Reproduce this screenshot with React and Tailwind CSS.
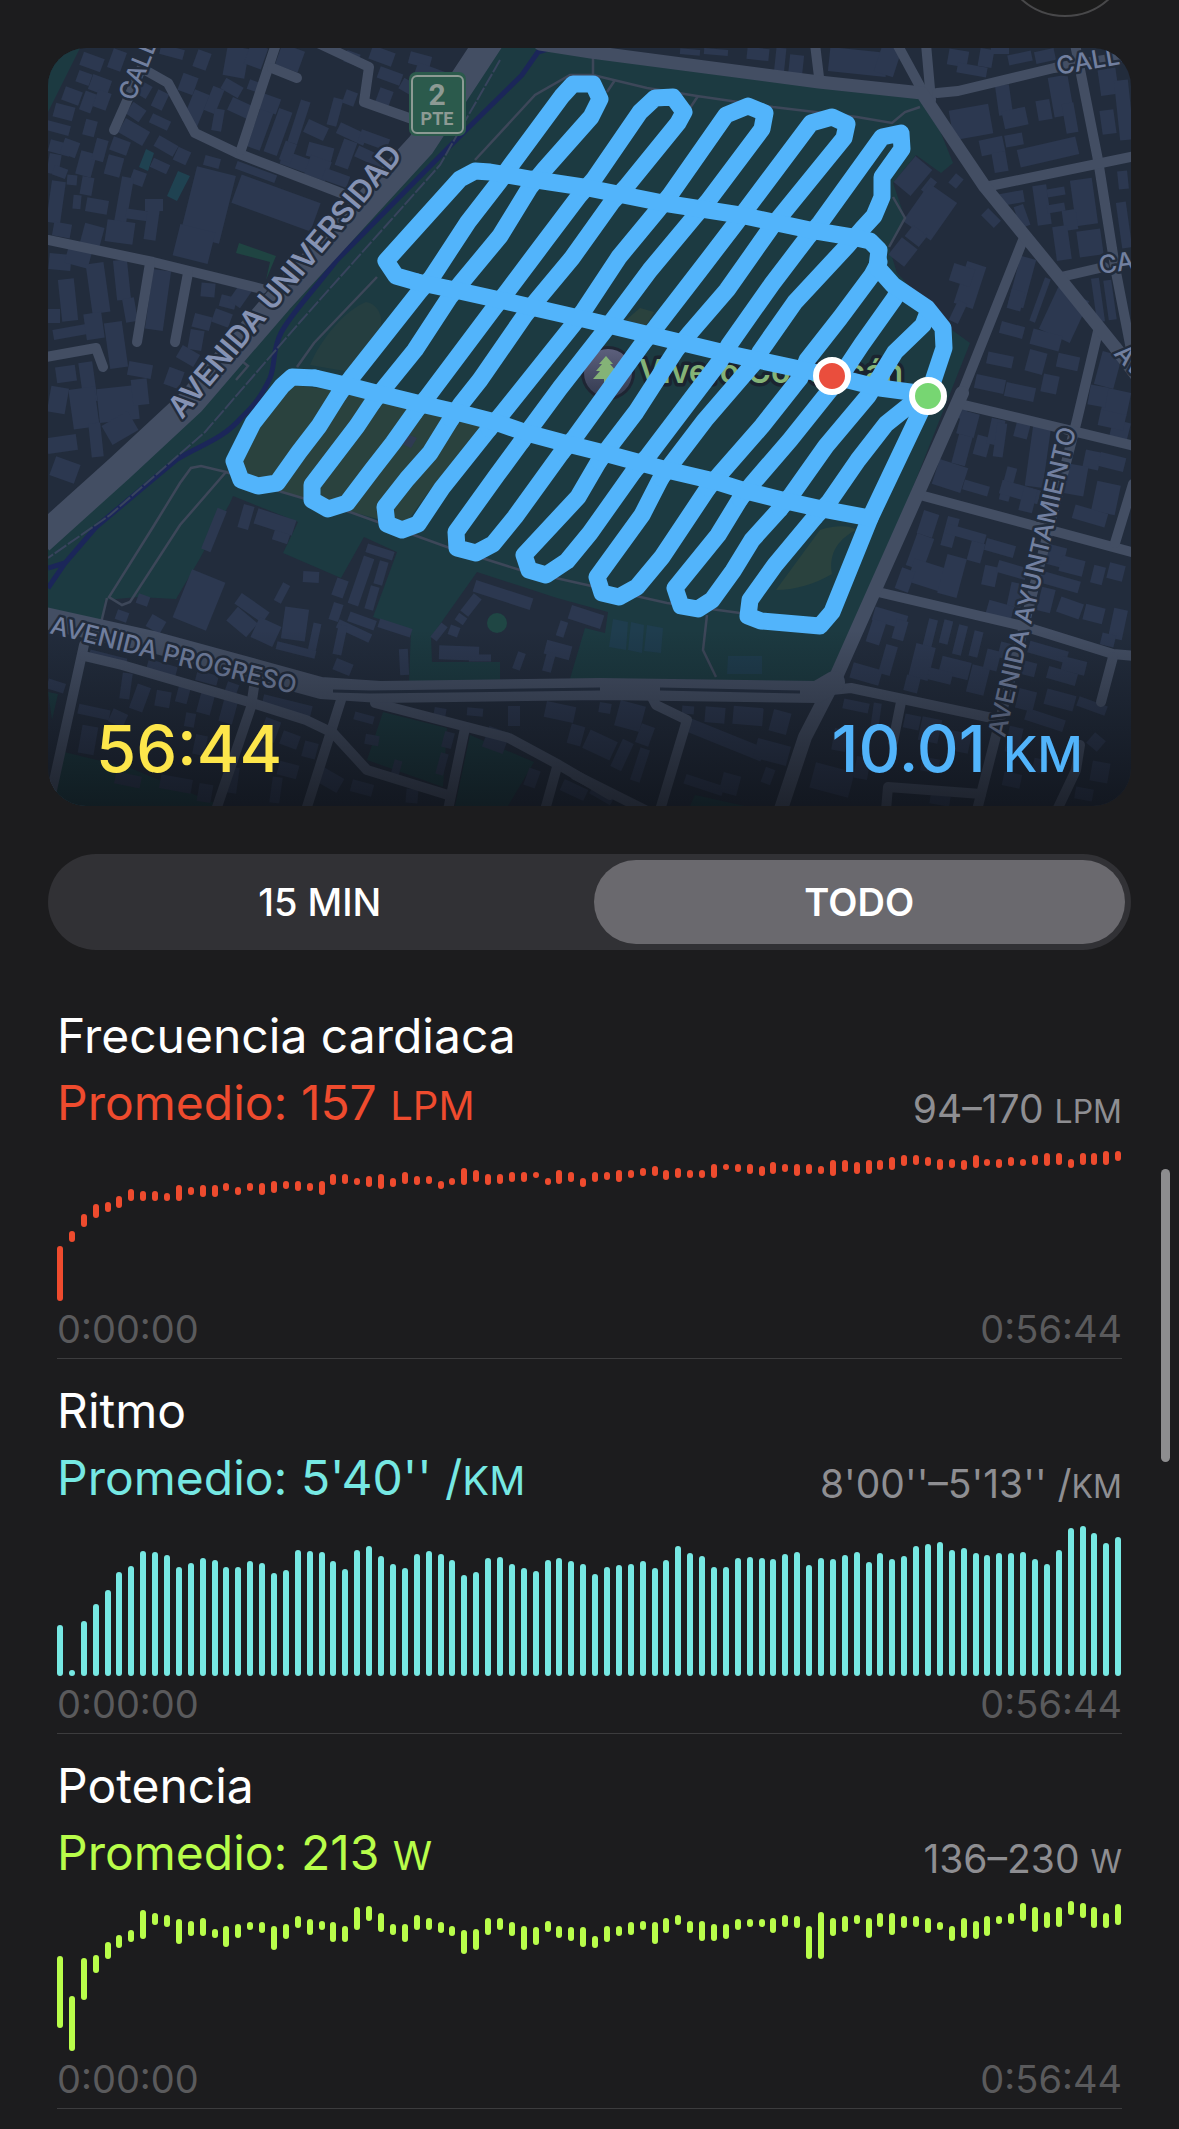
import { useState } from 'react';

const heartRate = [
  [94, 120], [125, 128], [133, 137], [138, 142], [141, 143], [143, 146], [147, 150], [147, 149], [147, 149], [147, 148],
  [147, 152], [150, 151], [149, 152], [149, 152], [152, 153], [150, 151], [152, 153], [150, 153], [151, 154], [153, 154],
  [152, 154], [152, 153], [150, 154], [155, 158], [156, 158], [155, 156], [154, 157], [153, 158], [154, 156], [156, 159],
  [155, 157], [156, 157], [153, 154], [155, 156], [155, 161], [157, 160], [155, 158], [156, 158], [157, 159], [157, 159],
  [159, 159], [155, 156], [156, 160], [157, 159], [154, 156], [157, 159], [158, 159], [157, 160], [159, 160], [160, 161],
  [160, 162], [158, 160], [159, 161], [159, 160], [159, 160], [159, 163], [163, 163], [162, 163], [161, 163], [160, 162],
  [161, 164], [162, 163], [160, 163], [161, 163], [161, 162], [160, 165], [162, 165], [161, 164], [161, 165], [163, 165],
  [163, 167], [165, 168], [166, 168], [165, 167], [163, 166], [164, 166], [163, 165], [164, 168], [165, 166], [164, 166],
  [165, 167], [165, 166], [166, 168], [165, 169], [166, 169], [164, 166], [166, 169], [166, 169], [166, 170], [168, 170],
];

const pace = [
  51, 6, 55, 72, 86, 104, 110, 125, 124, 121, 109, 113, 118, 116, 109, 109, 115, 113, 103, 106, 126, 125, 124, 115, 107,
  126, 130, 120, 112, 108, 122, 125, 122, 116, 101, 104, 118, 119, 112, 108, 105, 116, 118, 115, 112, 102, 109, 111, 112,
  115, 108, 116, 130, 123, 120, 109, 109, 118, 119, 118, 117, 122, 124, 111, 118, 117, 121, 124, 114, 123, 117, 120, 130,
  132, 134, 126, 128, 123, 121, 123, 123, 124, 117, 112, 126, 148, 150, 143, 133, 139,
].map((v) => [6, v]);

const power = [
  [151, 194], [136, 168], [169, 193], [187, 195], [196, 203], [203, 208], [207, 211], [209, 224], [218, 222], [217, 221],
  [206, 218], [211, 217], [211, 219], [210, 212], [204, 214], [210, 215], [215, 216], [213, 216], [202, 214], [209, 215],
  [216, 220], [212, 218], [215, 217], [207, 216], [207, 214], [215, 226], [221, 227], [214, 222], [212, 215], [207, 215],
  [215, 221], [215, 219], [213, 216], [211, 214], [199, 211], [202, 212], [212, 219], [215, 219], [211, 216], [202, 214],
  [205, 213], [214, 217], [210, 214], [208, 213], [204, 213], [203, 207], [207, 214], [211, 214], [212, 216], [215, 217],
  [206, 216], [213, 219], [218, 221], [213, 217], [208, 217], [208, 215], [209, 215], [215, 218], [217, 218], [217, 218],
  [213, 219], [217, 221], [216, 220], [196, 214], [196, 223], [211, 219], [214, 220], [219, 221], [210, 219], [217, 222],
  [212, 222], [216, 220], [217, 220], [213, 219], [215, 216], [208, 214], [210, 219], [209, 217], [211, 220], [219, 220],
  [219, 222], [221, 229], [214, 226], [216, 223], [217, 226], [225, 230], [223, 229], [216, 226], [216, 222], [218, 228],
];

const metrics = [
  { title: 'Frecuencia cardiaca', value: '157 ', unit: 'LPM', range: '94–170 ', color: 'text-[#ee4b2e]', data: heartRate, min: 94, max: 170 },
  { title: 'Ritmo', value: "5'40'' /", unit: 'KM', range: "8'00''–5'13'' /", color: 'text-[#76e8e3]', data: pace, min: 6, max: 150 },
  { title: 'Potencia', value: '213 ', unit: 'W', range: '136–230 ', color: 'text-[#b8fd4a]', data: power, min: 136, max: 230 },
];

// [cx, cy, width, height, rotation]
const buildings = [
  // north west
  [92, 62, 22, 14, 20], [117, 60, 14, 20, 20], [100, 85, 20, 16, 20], [84, 78, 14, 12, 20], [72, 96, 18, 14, 20],
  [88, 102, 12, 20, 20], [64, 112, 20, 14, 15], [58, 128, 24, 10, 15], [90, 128, 12, 16, 15], [102, 100, 14, 18, 20],
  [136, 112, 16, 14, 35], [134, 132, 28, 16, 30], [144, 90, 12, 14, 30], [160, 100, 12, 18, 25], [160, 122, 20, 10, 25],
  [172, 52, 24, 10, 15], [202, 60, 14, 18, 20], [188, 84, 16, 18, 20], [196, 108, 16, 34, 22], [214, 100, 12, 26, 22],
  [236, 62, 22, 30, 10], [256, 56, 18, 22, 20], [232, 88, 20, 12, 30], [240, 108, 22, 14, 25], [218, 120, 10, 22, 10],
  [290, 58, 24, 22, 20], [254, 86, 12, 10, 20], [262, 124, 14, 52, 20], [278, 132, 14, 46, 20], [270, 104, 18, 16, 20],
  [299, 122, 10, 44, 18], [316, 130, 22, 14, 25], [335, 112, 10, 28, 15], [352, 134, 30, 12, 25], [350, 98, 12, 14, 20],
  [352, 58, 14, 12, 20], [382, 56, 24, 14, 20], [390, 76, 24, 12, 20], [384, 98, 14, 18, 20], [420, 60, 22, 12, 15],
  [430, 74, 30, 14, 20], [410, 88, 20, 12, 30], [374, 140, 30, 12, 20], [372, 158, 34, 12, 25], [346, 154, 14, 28, 20],
  [320, 152, 26, 14, 15], [296, 162, 30, 14, 20], [318, 168, 22, 20, 20], [336, 178, 26, 12, 20], [288, 152, 12, 20, 20],
  [60, 148, 22, 12, 15], [54, 164, 12, 20, 10], [70, 148, 16, 16, 20], [86, 164, 16, 24, 15], [100, 150, 12, 22, 15],
  [120, 146, 18, 14, 20], [114, 166, 16, 20, 15], [138, 178, 14, 14, 20], [166, 146, 22, 12, 30], [182, 156, 14, 14, 25],
  [160, 166, 18, 10, 25], [60, 172, 14, 10, 20], [72, 180, 10, 10, 5], [87, 186, 12, 18, 10], [56, 202, 14, 42, 8],
  [77, 202, 8, 14, 5], [97, 206, 22, 14, 10], [62, 230, 18, 14, 10], [92, 236, 20, 22, 15], [124, 200, 12, 46, 10],
  [120, 232, 28, 22, 8], [138, 215, 24, 10, 8], [152, 222, 12, 36, 8], [154, 205, 18, 12, 0], [208, 205, 40, 70, 14],
  [194, 244, 36, 32, 14], [276, 203, 84, 30, 20], [256, 172, 42, 8, 20], [212, 162, 16, 10, 15],
  [60, 262, 22, 16, 5], [78, 258, 24, 16, 15], [68, 300, 16, 42, -6], [98, 288, 18, 50, -8], [122, 280, 14, 40, -6],
  [130, 310, 12, 24, -10], [158, 300, 18, 60, 8], [54, 316, 12, 14, 0], [70, 332, 34, 10, -10], [94, 326, 18, 26, -8],
  [116, 345, 18, 46, -8], [208, 290, 14, 14, 5], [228, 302, 16, 12, 15], [222, 318, 18, 14, 20], [202, 322, 18, 14, 15],
  [196, 340, 14, 20, 10], [188, 356, 20, 14, 30], [240, 296, 14, 20, 35], [66, 374, 20, 16, -8], [58, 400, 18, 26, 10],
  [88, 382, 14, 40, -8], [84, 408, 26, 40, -8], [118, 404, 40, 34, -6], [140, 370, 24, 14, 10], [140, 392, 16, 26, -6],
  [174, 378, 16, 18, 20], [62, 444, 30, 16, -8], [96, 440, 12, 34, -6], [65, 470, 26, 20, 20], [120, 428, 30, 22, -30],
  // south west
  [214, 530, 10, 44, 22], [246, 517, 11, 24, 16], [275, 522, 40, 16, 18], [281, 537, 16, 10, 18], [199, 600, 36, 52, 22],
  [143, 600, 12, 10, 20], [122, 616, 12, 10, 20], [156, 624, 16, 14, 30], [311, 577, 16, 11, 3], [282, 593, 8, 20, 28],
  [252, 608, 34, 13, 35], [242, 622, 26, 18, 40], [266, 632, 24, 22, 25], [295, 624, 24, 32, 8], [314, 640, 8, 34, 12],
  [296, 650, 40, 8, 14], [340, 588, 12, 18, 20], [361, 581, 11, 50, 19], [380, 552, 28, 9, 18], [381, 573, 9, 24, 16],
  [372, 598, 9, 24, 16], [336, 612, 10, 18, 18], [362, 621, 28, 10, 20], [354, 631, 36, 9, 25], [340, 640, 9, 30, 12],
  [395, 628, 34, 9, 18], [343, 667, 18, 12, 22], [404, 662, 9, 26, -3],
  [503, 595, 60, 12, 18], [471, 605, 10, 22, 38], [461, 619, 10, 8, 35], [439, 632, 8, 18, 38], [454, 631, 10, 10, 20],
  [459, 653, 40, 14, 2], [480, 658, 22, 7, 0], [519, 661, 8, 18, 20], [558, 650, 26, 14, 15], [549, 662, 9, 20, 15],
  [562, 629, 8, 16, 18], [586, 617, 34, 14, 18],
  // bottom strip
  [108, 658, 38, 8, 14], [56, 686, 18, 10, 18], [126, 686, 10, 26, 8], [140, 698, 14, 26, 20], [163, 699, 15, 16, 10],
  [183, 694, 12, 18, 15], [207, 678, 22, 10, 15], [162, 668, 30, 10, 16], [206, 702, 14, 24, 15], [232, 688, 12, 10, 20],
  [94, 712, 32, 10, 12], [88, 740, 16, 28, 10], [118, 718, 16, 14, 25], [190, 720, 10, 14, 10], [228, 712, 14, 22, 15],
  [287, 706, 50, 12, 14], [270, 730, 16, 22, 20], [290, 740, 18, 14, 20], [262, 750, 14, 18, 20], [310, 750, 14, 16, 15],
  [200, 745, 12, 20, 12], [176, 784, 32, 14, 10], [128, 780, 26, 12, 12], [205, 793, 14, 18, 10], [232, 780, 12, 26, 8],
  [276, 790, 10, 26, 8], [288, 770, 20, 14, 15], [330, 780, 24, 16, 30], [362, 788, 22, 12, 15], [364, 718, 20, 8, 15],
  [372, 740, 14, 10, 10], [396, 770, 8, 20, 15], [412, 796, 12, 14, 5], [440, 712, 12, 8, 10], [475, 712, 16, 8, 5],
  [514, 716, 12, 20, 0], [496, 740, 22, 22, 20], [560, 712, 30, 16, 12], [576, 735, 14, 20, 15], [448, 740, 10, 16, 15],
  [442, 764, 8, 22, 15], [532, 778, 12, 18, 20], [574, 790, 26, 12, 25], [605, 708, 12, 10, 10], [630, 716, 26, 26, 15],
  [600, 745, 30, 20, 25], [622, 755, 12, 30, 25], [645, 735, 14, 20, 20], [640, 765, 10, 34, 18], [688, 710, 12, 8, 5],
  [715, 715, 20, 16, 5], [748, 716, 30, 18, 5], [780, 722, 18, 22, 15], [726, 740, 80, 14, 22], [772, 752, 34, 20, 15],
  [704, 785, 40, 10, 18], [730, 784, 18, 20, 15], [768, 776, 10, 16, 20], [602, 795, 24, 10, 30], [840, 740, 14, 22, 10],
  [856, 706, 26, 10, 12], [876, 716, 8, 26, 8], [832, 780, 40, 26, 15], [862, 768, 14, 22, 10], [912, 722, 16, 14, 12],
  [930, 730, 20, 24, 12], [960, 742, 20, 20, 12], [930, 765, 18, 14, 10], [1014, 740, 14, 26, 12], [1045, 720, 40, 12, 18],
  [1060, 700, 30, 16, 15], [1096, 742, 14, 14, 40], [1100, 772, 18, 20, 10], [1040, 766, 14, 14, 12], [1012, 780, 18, 14, 12],
  [1084, 794, 18, 12, 10], [940, 800, 20, 10, 10],
  // north east
  [690, 52, 20, 6, 5], [716, 52, 24, 6, 5], [758, 54, 22, 12, 6], [780, 62, 10, 28, 6], [796, 66, 14, 22, 6],
  [858, 62, 58, 24, 6], [888, 60, 20, 30, 18], [958, 58, 20, 16, 10], [972, 70, 30, 10, 10], [986, 58, 14, 18, 10],
  [1020, 58, 24, 10, -12], [1045, 56, 20, 12, -12], [1000, 50, 18, 8, 0],
  [971, 122, 40, 30, -10], [1004, 100, 14, 30, -8], [1015, 118, 24, 18, -12], [992, 146, 24, 16, -12], [1000, 162, 14, 20, -10],
  [1061, 96, 20, 40, -10], [1044, 110, 14, 20, -10], [1048, 152, 60, 18, -13], [1014, 140, 18, 12, -10], [1070, 118, 12, 30, -10],
  [1108, 80, 18, 30, -8], [1124, 110, 14, 60, -6], [1108, 122, 14, 24, -8], [1012, 198, 24, 12, -10], [1022, 216, 10, 22, -20],
  [1042, 205, 14, 40, -8], [1056, 192, 18, 8, -10], [1056, 208, 18, 8, -10], [1084, 202, 22, 46, -8], [1070, 220, 14, 20, -8],
  [1062, 243, 15, 34, -8], [1090, 243, 24, 26, -8], [1124, 225, 10, 46, -8], [1123, 180, 10, 18, -6],
  [913, 176, 22, 34, 40], [929, 186, 8, 16, 38], [956, 181, 10, 12, 40], [930, 212, 34, 46, 35], [916, 236, 18, 14, 38],
  [991, 218, 10, 18, -45], [903, 252, 20, 22, 38], [970, 285, 20, 44, 18], [962, 275, 22, 18, 18], [958, 312, 10, 22, 25],
  [1022, 282, 16, 50, 15], [1016, 300, 14, 20, 15], [1040, 300, 6, 46, 20], [1064, 315, 34, 46, 25], [1046, 340, 30, 16, 15],
  [1012, 330, 24, 12, 15], [1036, 362, 18, 22, 15], [1068, 362, 22, 14, 12], [1000, 360, 26, 12, 12], [990, 384, 30, 14, 12],
  [1020, 392, 30, 14, 12], [1050, 384, 16, 18, 12], [1098, 300, 8, 44, -8], [1110, 300, 8, 40, -8], [1108, 370, 20, 34, 15],
  [1116, 402, 26, 24, 12], [1098, 396, 18, 20, 10], [962, 414, 8, 10, 15],
  // east blocks
  [968, 424, 18, 24, 15], [962, 450, 14, 30, 15], [950, 476, 30, 26, 18], [982, 446, 14, 20, 15], [996, 432, 14, 26, 12],
  [1000, 440, 10, 34, 8], [1022, 430, 14, 16, 15], [1038, 456, 18, 62, 8], [1008, 484, 10, 34, 15], [1020, 492, 40, 14, 16],
  [976, 488, 26, 10, 16], [1052, 490, 14, 30, 10], [1028, 500, 14, 24, 14], [1092, 460, 16, 18, 12], [1112, 462, 26, 14, 14],
  [1076, 480, 20, 30, 10], [1106, 498, 24, 30, 12], [1090, 516, 34, 14, 16], [1120, 430, 18, 18, 14], [1112, 420, 26, 16, 12],
  [928, 524, 16, 24, 18], [950, 532, 12, 30, 15], [920, 552, 18, 34, 20], [966, 534, 40, 10, 16], [976, 552, 14, 20, 15],
  [930, 576, 40, 24, 18], [905, 580, 14, 22, 20], [952, 576, 20, 40, 15], [990, 576, 14, 20, 12], [1000, 548, 30, 12, 16],
  [1012, 570, 30, 12, 16], [1016, 595, 14, 24, 12], [1000, 610, 26, 14, 16], [1056, 556, 18, 20, 14], [1072, 566, 24, 16, 14],
  [1060, 582, 40, 12, 16], [1098, 575, 12, 18, 14], [1116, 572, 16, 16, 14], [1046, 600, 14, 24, 14], [1070, 608, 24, 16, 20],
  [1094, 614, 20, 16, 14], [1118, 624, 14, 30, 12], [1108, 640, 14, 12, 14], [890, 618, 34, 14, 16], [876, 632, 14, 24, 18],
  [900, 630, 12, 20, 16], [888, 660, 12, 30, 16], [866, 674, 30, 16, 16], [930, 634, 9, 30, 14], [946, 632, 9, 24, 14],
  [960, 640, 9, 30, 14], [976, 644, 9, 26, 14], [922, 662, 20, 34, 14], [955, 668, 30, 18, 14], [940, 676, 24, 12, 14],
  [912, 684, 14, 16, 14], [978, 680, 18, 28, 14], [1010, 652, 22, 16, 14], [1048, 652, 40, 12, 16], [1074, 666, 24, 14, 14],
  [1026, 668, 20, 14, 14], [1026, 700, 18, 20, 14], [1062, 676, 30, 12, 16], [992, 660, 14, 20, 14], [1092, 706, 30, 10, 20],
];

const streets = [
  'M145 70L168 83L195 133L237 153L341 193', 'M276 44L241 150', 'M272 68L297 78', 'M318 43L369 67L364 102L412 119',
  'M142 67L114 130', 'M48 240L153 262L262 289', 'M150 263L137 342', 'M188 273L175 342', 'M40 358L96 348L103 367',
  'M897 44L922 90', 'M926 44L931 100', 'M937 93L958 91L1054 68L1140 54', 'M1075 44L1098 160L1115 267L1135 370',
  'M985 187L1135 156', 'M1061 277L1104 267', 'M1023 240L962 393', 'M1099 327L1077 420L1023 630L1000 720L977 810',
  'M956 403L1135 446', 'M920 495L1135 553', 'M878 592L1023 626L1113 654L1135 656', 'M1133 484L1115 543',
  'M1113 657L1101 702', 'M832 690L851 688L992 718', 'M901 702L893 742', 'M1080 745L1076 770L1057 810', 'M886 810L888 787L981 794',
  'M815 44L819 77', 'M647 688L656 705L687 720L660 810', 'M575 775L645 810', 'M375 703L467 727L509 738L559 765L610 795',
  'M465 728L448 810', 'M557 767L545 810', 'M341 700L306 810', 'M84 645L52 790', 'M84 656L122 665L249 702L306 720L333 733L367 770L448 795',
  'M254 687L251 707L216 810',
];

// pairs of laps: each path runs up one lane, turns and comes back
const laps = [
  'M339 394L319 426L299 452L277 483L258 486L241 480L234 461L253 423L282 386L292 377L315 378',
  'M373 402L357 426L312 485L312 500L328 509L347 503L372 470L393 443L415 412',
  'M451 419L430 453L407 479L385 507L387 524L402 530L418 524L442 488L489 429',
  'M522 441L497 475L456 532L457 548L476 553L493 544L515 517L562 452',
  'M599 461L578 497L524 555L529 570L546 575L567 561L590 533L634 471',
  'M661 478L642 515L597 577L602 593L619 597L637 587L662 557L708 488',
  'M740 499L718 535L675 588L681 606L698 609L712 600L733 571L752 540L780 509',
  'M815 517L775 565L750 600L748 616L761 621L820 626L832 612L870 518L928 396',
  'M339 394L351 378L419 292L432 277L468 222L499 182L511 165L562 96L573 84L593 84L600 99L591 117L544 170L530 187L500 236L461 283L449 298L415 350L385 387L373 402',
  'M415 412L428 396L494 308L506 293L545 241L579 196L594 179L640 112L655 98L673 97L684 112L678 123L626 187L612 202L572 258L537 300L525 315L480 380L461 404L451 419',
  'M489 429L501 415L573 325L584 310L619 257L657 211L670 195L726 115L748 106L765 113L762 129L708 201L695 216L650 270L615 317L603 333L560 388L532 426L522 441',
  'M562 452L575 437L643 343L656 327L700 270L736 223L748 207L811 123L832 117L847 124L844 138L783 213L770 229L727 290L689 334L676 350L636 412L610 446L599 461',
  'M634 471L648 456L720 361L729 345L772 284L807 238L820 223L882 137L901 133L902 149L882 177L882 197L874 216L862 229L848 245L795 302L760 352L755 362L705 420L673 462L661 478',
  'M708 488L720 474L762 426L800 378L807 360L840 318L872 275L879 262',
  'M740 499L752 484L790 440L838 380L862 344L894 299L898 292',
  'M780 509L792 494L826 446L868 396L895 352L923 325L928 312',
  'M815 517L829 502L858 460L886 424L916 400',
];

const crossings = [
  'M417 282L396 276L386 261L460 179L475 171L490 172L530 179L583 187L663 203L740 215L810 230L852 237L870 241L879 250L877 267L893 285L927 308L943 328L944 348L928 396',
  'M417 282L455 290L500 300L579 318L650 335L725 353L832 376L880 388L925 394',
  'M315 378L345 385L376 393L421 404L456 412L495 422L527 433L568 444L604 453L641 463L667 470L714 481L746 491L786 501L822 509L870 518',
];

function RouteMap() {
  return (
    <svg viewBox="48 48 1083 758" className="block h-auto w-full" role="img" aria-label="Vivero Coyoacán">
      <defs>
        <linearGradient id="fade" x1="0" y1="0" x2="0" y2="1">
          <stop offset="0" stopColor="#0b0d12" stopOpacity="0" />
          <stop offset="1" stopColor="#0b0d12" stopOpacity="0.66" />
        </linearGradient>
        <linearGradient id="poi" x1="0" y1="0" x2="0" y2="1">
          <stop offset="0" stopColor="#5c5f7c" />
          <stop offset="1" stopColor="#343b50" />
        </linearGradient>
      </defs>
      <rect x="48" y="48" width="1083" height="758" fill="#222c3c" />

      {/* park */}
      <g fill="#1c3a41">
        <path d="M48 48H80L48 112Z" />
        <path d="M496 48H560L916 92L935 118L953 163L941 173L916 155L893 183L905 218L889 247L897 273L952 330L970 343L836 682L345 690L48 614V540L190 412L300 290L420 150Z" />
        <path d="M383 712L447 728L443 787L367 760ZM470 735L534 762L508 806H455Z" />
        <path d="M64 752L130 768L222 806H48ZM48 692L58 694L52 720ZM695 795L745 806H690Z" />
        <path d="M239 243L276 256L266 280L270 262L236 253Z" fill="#1f4442" />
      </g>
      <path d="M146 149L154 153L148 171L139 167ZM178 171L190 176L177 201L167 196Z" fill="#1f4251" />
      <g fill="#2a423e">
        <path d="M366 302C378 304 386 318 378 336L350 372L310 365C320 340 345 310 366 302Z" fill="#253e40" />
        <path d="M284 384L350 392L482 424L430 490L404 526L330 506L282 492L246 484L236 458Z" />
        <path d="M776 590L820 530C836 524 852 526 856 530C840 538 828 552 832 574C815 584 795 590 776 590Z" />
        <path d="M640 308L654 312L646 326L626 320Z" />
      </g>
      <path d="M233 496L298 522L283 553L341 578L364 537L397 552L373 617L411 630L409 682H325L101 625L105 600L138 597L176 599L199 560L230 503Z" fill="#222c3c" />
      <path d="M477 572L557 598L608 612L605 633L585 628L569 682H500V662H432L431 637Z" fill="#222c3c" />
      <circle cx="497" cy="623" r="10" fill="#1f4644" />
      <g fill="#1f3d4e">
        <path d="M613 619L628 622L626 650L609 647ZM631 622L644 625L642 653L628 650ZM647 625L663 628L661 653L644 651Z" />
        <path d="M728 656H762V674H727Z" />
      </g>

      <g fill="#2c3850">
        {buildings.map(([x, y, w, h, r], i) => (
          <rect key={i} x={x - w / 2} y={y - h / 2} width={w} height={h} transform={`rotate(${r} ${x} ${y})`} />
        ))}
      </g>
      <path d="M407 434L417 438L411 448L402 444Z" fill="#2f3b52" />

      {/* footpaths */}
      <g fill="none" stroke="#3d4759" strokeWidth="2.5">
        <path d="M297 367L314 343L377 277M475 160L535 95L570 75H593L647 88L697 96L773 107L857 117L892 123L905 112L920 107M593 55V75M615 80L607 92M698 96L690 108" />
        <path d="M226 472L201 466L191 468L180 483L153 527L109 597L122 605L130 602L180 525L226 472L282 492L350 512L447 547L520 570L587 585L667 603L740 613M107 598L101 623M707 615L703 650L716 677" />
        <path d="M893 197L905 218L889 247M236 380L248 366L243 362" />
      </g>
      <path d="M551 48L538 52L522 75L459 137L337 260C310 295 290 315 281 333C272 350 276 362 270 378C262 395 255 405 241 418C222 440 200 445 176 460L96 527L65 563L48 588M48 568L65 563" fill="none" stroke="#1b2659" strokeWidth="5" />

      {/* streets */}
      <g fill="none" stroke="#434e63" strokeLinejoin="round" strokeLinecap="round">
        <path d="M490 40L421 145L279 300L191 402L120 468L40 540" strokeWidth="28" strokeLinecap="butt" />
        <g strokeWidth="10">
          {streets.map((d) => (
            <path key={d} d={d} />
          ))}
        </g>
        <path d="M540 44L591 52L819 82L922 93L932 108L950 135L985 187L1061 280L1115 347L1140 380" strokeWidth="13" />
        <path d="M962 393L916 497L836 677L805 737L780 812" strokeWidth="14" />
        <path d="M40 617L153 642L321 688L380 692L600 689L817 692L834 682" strokeWidth="22" />
      </g>
      <path d="M333 691L370 692L600 689M660 689L800 692" fill="none" stroke="#253042" strokeWidth="3" />
      <path d="M500 60L440 165L300 322L205 432L110 515L48 558" fill="none" stroke="#38445d" strokeWidth="2" strokeDasharray="14 2" />

      {/* street names */}
      <g fill="#8592b3" stroke="#222c3c" strokeWidth="5" strokeLinejoin="round" paintOrder="stroke" className="font-['Inter',sans-serif]">
        <text x="182" y="420" fontSize="30" fontWeight="600" transform="rotate(-50 182 420)">AVENIDA UNIVERSIDAD</text>
        <g fill="#717f9f" fontSize="25" fontWeight="500">
          <text x="49" y="633" transform="rotate(14 49 633)">AVENIDA PROGRESO</text>
          <text x="1005" y="738" transform="rotate(-77 1005 738)">AVENIDA AYUNTAMIENTO</text>
          <text x="134" y="102" transform="rotate(-68 134 102)">CALL</text>
          <text x="1058" y="75" transform="rotate(-10 1058 75)">CALL</text>
          <text x="1100" y="274" transform="rotate(-8 1100 274)">CA</text>
          <text x="1113" y="354" transform="rotate(48 1113 354)">AV</text>
        </g>
      </g>

      <g className="font-['Roboto',sans-serif]" textAnchor="middle" fontWeight="700" fill="#8d9a94">
        <rect x="409" y="72" width="57" height="64" rx="7" fill="#2b5a4c" />
        <rect x="412" y="76" width="51" height="57" rx="5" fill="#2b5a4c" stroke="#8d9a94" strokeWidth="2" />
        <text x="437" y="105" fontSize="30">2</text>
        <text x="437" y="125" fontSize="18">PTE</text>
      </g>

      {/* place marker */}
      <circle cx="608" cy="373" r="27" fill="#1e2533" />
      <circle cx="608" cy="373" r="24" fill="url(#poi)" />
      <path d="M606 356L613 364H610L616 371H612L619 379H608V386H604V379H593L600 371H596L602 364H599Z" fill="#84b377" />
      <text x="639" y="383" fontSize="32" fontWeight="600" fill="#84b377" stroke="#1a2430" strokeWidth="7" strokeLinejoin="round" paintOrder="stroke" className="font-['Inter',sans-serif]">
        Vivero Coyoacán
      </text>

      {/* route */}
      <g fill="none" stroke="#52b4fb" strokeWidth="17" strokeLinejoin="round" strokeLinecap="round">
        {[...laps, ...crossings].map((d) => (
          <path key={d} d={d} />
        ))}
      </g>
      <rect x="48" y="630" width="1083" height="176" fill="url(#fade)" />
      <g stroke="#fff" strokeWidth="6">
        <circle cx="832" cy="376" r="16" fill="#ea4e3d" />
        <circle cx="928" cy="396" r="16" fill="#77d672" />
      </g>
    </svg>
  );
}

function RangeBars({ data, min, max }) {
  const scale = 144 / (max - min);
  return (
    <div className="mt-[18px] flex h-[150px] items-start justify-between">
      {data.map(([low, high], i) => (
        <span
          key={i}
          className="w-[6px] rounded-full bg-current"
          style={{ marginTop: (max - high) * scale, height: (high - low) * scale + 6 }}
        />
      ))}
    </div>
  );
}

function Metric({ title, value, unit, range, color, data, min, max }) {
  return (
    <section className="border-b border-[#3c3c3e] pt-[22px] pb-[7px]">
      <h2 className="text-[48px] leading-[60px] text-white">{title}</h2>
      <div className={`mt-[7px] ${color}`}>
        <div className="flex h-[60px] items-end justify-between whitespace-pre">
          <p className="text-[48px] leading-[60px]">
            Promedio: {value}<span className="text-[40px] leading-none">{unit}</span>
          </p>
          <p className="text-[39px] leading-[48px] text-[#8e8e92]">
            {range}<span className="text-[32px] leading-none">{unit}</span>
          </p>
        </div>
        <RangeBars data={data} min={min} max={max} />
      </div>
      <div className="mt-[6px] flex justify-between text-[38px] leading-[44px] text-[#5a5a5c]">
        <span>0:00:00</span>
        <span>0:56:44</span>
      </div>
    </section>
  );
}

export default function App() {
  const [span, setSpan] = useState('TODO');

  return (
    <div className="relative min-h-screen overflow-hidden bg-[#1c1c1e] px-12 pb-5 font-['Inter',sans-serif]">
      <header className="flex h-12 items-end justify-end pb-[31px]">
        <button aria-label="Cerrar" className="size-[132px] shrink-0 rounded-full border-2 border-[#48484a] bg-[#1b1b1b]" />
      </header>

      <div className="relative overflow-hidden rounded-[38px]">
        <RouteMap />
        <div className="absolute inset-x-0 bottom-0 flex items-baseline justify-between px-12 pb-6 text-[65px] leading-[66px] font-medium">
          <span className="text-[#fde64b]">56:44</span>
          <span className="text-[#52b4fb]">
            10.01 <span className="text-[50px] leading-none">KM</span>
          </span>
        </div>
      </div>

      <div className="mt-12 flex h-24 gap-2 rounded-full bg-[#313135] p-[6px]">
        {['15 MIN', 'TODO'].map((label) => (
          <button
            key={label}
            onClick={() => setSpan(label)}
            className={`flex-1 rounded-full text-[38px] text-white ${span === label ? 'bg-[#6a696e] font-semibold' : 'font-medium'}`}
          >
            {label}
          </button>
        ))}
      </div>

      <main className="mt-[34px] px-[9px]">
        {metrics.map((metric) => (
          <Metric key={metric.title} {...metric} />
        ))}
      </main>

      {/* scroll indicator */}
      <div className="absolute top-[1169px] right-[9px] h-[293px] w-[9px] rounded-full bg-[#8d8d8f]" />
    </div>
  );
}
